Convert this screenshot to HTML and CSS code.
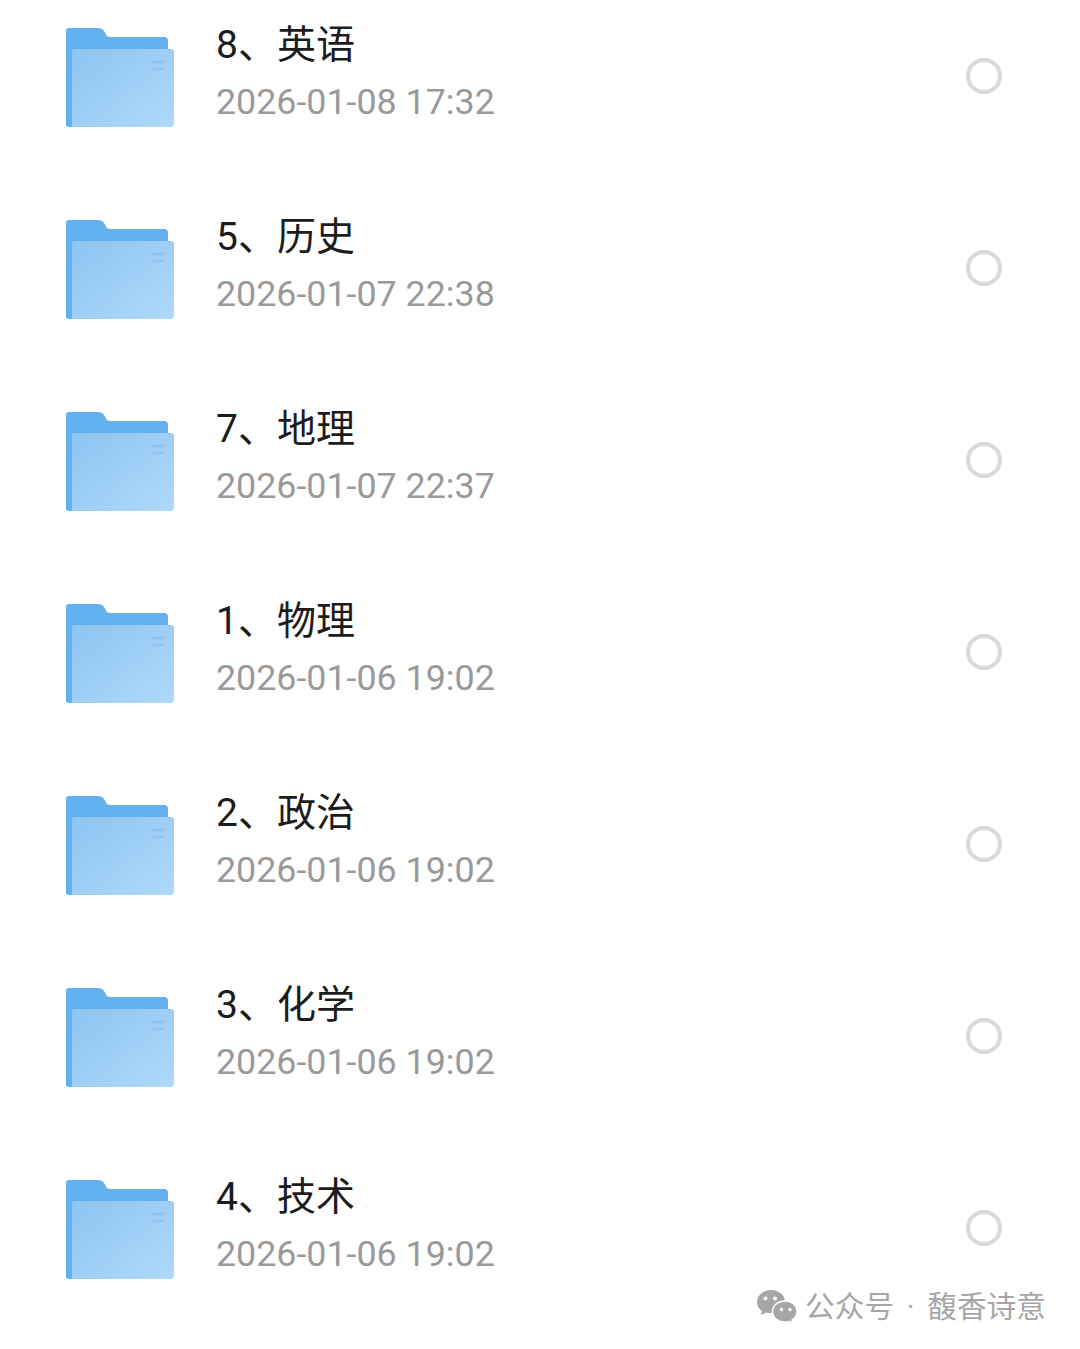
FILE: index.html
```html
<!DOCTYPE html>
<html lang="zh-CN">
<head>
  <meta charset="UTF-8">
  <meta name="viewport" content="width=device-width, initial-scale=1.0">
  <title>文件夹列表</title>
  <link rel="stylesheet" href="styles.css">
</head>
<body>
  <svg class="defs" width="0" height="0" aria-hidden="true">
    <defs>
      <linearGradient id="front" x1="0" y1="0" x2="1" y2="1">
        <stop offset="0" stop-color="#8cc4f1"/>
        <stop offset="1" stop-color="#b0d9fb"/>
      </linearGradient>
      <symbol id="folder" viewBox="0 0 108 100">
        <path d="M3 1H32Q36 1 38 4L41 9Q42 10 44 10H98Q102 10 102 14V97Q102 100 98 100H3Q0 100 0 97V4Q0 1 3 1Z" fill="#62b1ee"/>
        <path d="M8 22H105Q108 22 108 25V97Q108 100 105 100H6V24Q6 22 8 22Z" fill="url(#front)"/>
        <path d="M86 35H98M86 42H98" stroke="#8fbfe6" stroke-width="2.5" opacity=".7"/>
      </symbol>
    </defs>
  </svg>

  <main class="list">
    <div class="row">
      <svg class="folder"><use href="#folder"/></svg>
      <div class="info">
        <div class="name">8、英语</div>
        <div class="date">2026-01-08 17:32</div>
      </div>
      <span class="radio"></span>
    </div>
    <div class="row">
      <svg class="folder"><use href="#folder"/></svg>
      <div class="info">
        <div class="name">5、历史</div>
        <div class="date">2026-01-07 22:38</div>
      </div>
      <span class="radio"></span>
    </div>
    <div class="row">
      <svg class="folder"><use href="#folder"/></svg>
      <div class="info">
        <div class="name">7、地理</div>
        <div class="date">2026-01-07 22:37</div>
      </div>
      <span class="radio"></span>
    </div>
    <div class="row">
      <svg class="folder"><use href="#folder"/></svg>
      <div class="info">
        <div class="name">1、物理</div>
        <div class="date">2026-01-06 19:02</div>
      </div>
      <span class="radio"></span>
    </div>
    <div class="row">
      <svg class="folder"><use href="#folder"/></svg>
      <div class="info">
        <div class="name">2、政治</div>
        <div class="date">2026-01-06 19:02</div>
      </div>
      <span class="radio"></span>
    </div>
    <div class="row">
      <svg class="folder"><use href="#folder"/></svg>
      <div class="info">
        <div class="name">3、化学</div>
        <div class="date">2026-01-06 19:02</div>
      </div>
      <span class="radio"></span>
    </div>
    <div class="row">
      <svg class="folder"><use href="#folder"/></svg>
      <div class="info">
        <div class="name">4、技术</div>
        <div class="date">2026-01-06 19:02</div>
      </div>
      <span class="radio"></span>
    </div>
  </main>

  <!-- 水印 -->
  <div class="mark">
    <svg class="wechat" viewBox="0 0 40 36">
      <path d="M14 1C6.500 1 0 6.300 0 13C0 17 2 20 5 22L4 26L9 23.500C10.500 24 12 24.200 14 24.200C21 24.200 28 19 28 12.500C28 6 21.500 1 14 1Z" fill="#a6a6a6"/>
      <path d="M28 12C21 12 15.500 16.500 15.500 22.500C15.500 28.500 21 33 28 33C29.500 33 31 32.800 32 32.400L36 35L35 31C38 29 40 26 40 22.500C40 16.500 35 12 28 12Z" fill="#a6a6a6" stroke="#fff" stroke-width="1.500"/>
      <circle cx="8.500" cy="9.500" r="2" fill="#fff"/>
      <circle cx="18" cy="9.500" r="2" fill="#fff"/>
      <circle cx="24.500" cy="20.500" r="1.700" fill="#fff"/>
      <circle cx="33" cy="20.500" r="1.700" fill="#fff"/>
    </svg>
    <span>公众号 · 馥香诗意</span>
  </div>
</body>
</html>
```

FILE: styles.css
```css
* {
  margin: 0;
  padding: 0;
  box-sizing: border-box;
}

body {
  position: relative;
  height: 1349px;
  background: #fff;
  font-family: Roboto, "Noto Sans CJK SC", sans-serif;
  overflow: hidden;
}

.defs {
  position: absolute;
}

.list {
  margin-top: -20px;
}

.row {
  display: flex;
  align-items: center;
  height: 192px;
  padding: 0 78px 0 66px;
}

.folder {
  flex: none;
  width: 108px;
  height: 100px;
  margin: 2px 42px 0 0;
}

.info {
  flex: 1;
  margin-top: -11px;
}

.name {
  font-size: 39px;
  line-height: 50px;
  color: #1c1c1c;
}

.date {
  margin-top: 12px;
  font-size: 35.8px;
  line-height: 40px;
  color: #999;
}

.radio {
  flex: none;
  width: 36px;
  height: 36px;
  border: 4px solid #d9d9d9;
  border-radius: 50%;
}

.mark {
  position: absolute;
  top: 1289px;
  right: 34px;
  display: flex;
  align-items: center;
  gap: 8px;
  font-size: 29.7px;
  word-spacing: 5.3px;
  line-height: 36px;
  color: #a6a6a6;
}

.wechat {
  width: 40px;
  height: 36px;
}
```
